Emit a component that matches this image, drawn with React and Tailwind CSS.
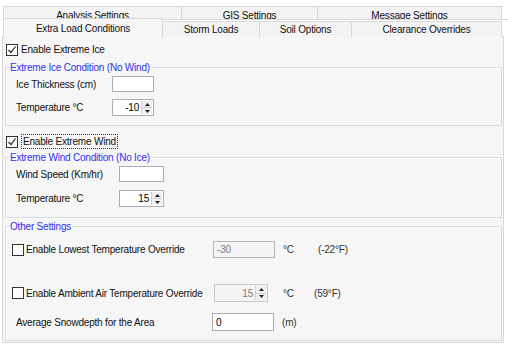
import React from 'react';

const font = "font-['Liberation_Sans',Arial,sans-serif] text-[10px] tracking-[-0.2px]";

const Check = ({ checked }) => (
  <span className="flex h-[12px] w-[12px] shrink-0 items-center justify-center border border-[#333] bg-white">
    {checked && (
      <svg width="10" height="10" viewBox="0 0 10 10">
        <polyline points="1.5,5 4,7.5 8.5,1.5" fill="none" stroke="#222" strokeWidth="1.2" />
      </svg>
    )}
  </span>
);

const SpinButtons = () => (
  <div className="flex w-[11px] flex-col border-l border-[#cfcfcf] bg-[#f0f0f0]">
    <div className="flex flex-1 items-center justify-center border-b border-[#cfcfcf]">
      <svg width="5" height="3" viewBox="0 0 5 3"><polygon points="0,3 2.5,0 5,3" fill="#222" /></svg>
    </div>
    <div className="flex flex-1 items-center justify-center">
      <svg width="5" height="3" viewBox="0 0 5 3"><polygon points="0,0 2.5,3 5,0" fill="#222" /></svg>
    </div>
  </div>
);

const Spin = ({ value, width, height = 'h-[17px]', disabled }) => (
  <div className={`flex ${width} ${height} border ${disabled ? 'border-[#c8c8c8] bg-[#f4f4f4]' : 'border-[#abadb3] bg-white'} p-[1px]`}>
    <div className={`flex flex-1 items-center justify-end pr-[2px] ${disabled ? 'text-[#7a7a7a]' : 'text-black'}`}>{value}</div>
    <SpinButtons />
  </div>
);

const TextBox = ({ value = '', width, height = 'h-[16px]', disabled }) => (
  <div className={`flex ${width} ${height} items-center border px-[3px] ${disabled ? 'border-[#b5b5b5] bg-[#f4f4f4] text-[#7a7a7a]' : 'border-[#abadb3] bg-white text-black'}`}>
    {value}
  </div>
);

const Group = ({ title, children, className = '' }) => (
  <fieldset className={`border border-[#d3dde3] shadow-[inset_1px_1px_0_#ffffff] ${className}`}>
    <legend className="ml-[3px] px-[1px] leading-[13px] text-[#3030f2]">{title}</legend>
    {children}
  </fieldset>
);

const backTabs = [
  { label: 'Analysis Settings', w: 'w-[179px]' },
  { label: 'GIS Settings', w: 'w-[136px]' },
  { label: 'Message Settings', w: 'w-[184px]' },
];

const frontTabs = [
  { label: 'Storm Loads', w: 'w-[97px]' },
  { label: 'Soil Options', w: 'w-[92px]' },
  { label: 'Clearance Overrides', w: 'w-[150px]' },
];

export default function App() {
  return (
    <div className={`h-[344px] w-[508px] overflow-hidden bg-white pl-[2px] pt-[6px] text-[#111] ${font}`}>
      {/* back tab row */}
      <div className="ml-[1px] flex h-[13px]">
        {backTabs.map((t, i) => (
          <div
            key={t.label}
            className={`${t.w} h-[13px] overflow-hidden border-t border-r border-[#d9d9d9] bg-[#f3f3f3] pt-[2px] text-center leading-[13px] ${i === 0 ? 'border-l' : ''}`}
          >
            {t.label}
          </div>
        ))}
      </div>

      {/* front tab row */}
      <div className="relative z-10 flex h-[17px] border-t border-[#d9d9d9]">
        <div className="-mt-[2px] ml-[1px] h-[20px] w-[160px] self-start border-x border-t border-[#d9d9d9] bg-[#f6f6f6] pt-[3px] text-center leading-[14px]">
          Extra Load Conditions
        </div>
        {frontTabs.map((t) => (
          <div
            key={t.label}
            className={`${t.w} mt-[1px] h-[16px] border-t border-r border-[#d9d9d9] bg-[#f3f3f3] text-center leading-[16px]`}
          >
            {t.label}
          </div>
        ))}
      </div>

      {/* page */}
      <div className="h-[307px] w-[502px] border border-[#d9d9d9] bg-[#f6f6f6] px-[2px] pt-[6px]">
        <div className="flex h-[13px] items-center gap-[3px] pl-[1px]">
          <Check checked />
          <span>Enable Extreme Ice</span>
        </div>

        <Group title="Extreme Ice Condition (No Wind)" className="mt-[5px] w-[497px]">
          <div className="flex flex-col gap-[7px] pb-[9px] pl-[10px] pt-[2px]">
            <div className="flex h-[16px] items-center">
              <span className="w-[96px]">Ice Thickness (cm)</span>
              <TextBox width="w-[42px]" />
            </div>
            <div className="flex h-[17px] items-center">
              <span className="w-[96px]">Temperature °C</span>
              <Spin value="-10" width="w-[42px]" />
            </div>
          </div>
        </Group>

        <div className="mt-[8px] flex h-[15px] items-center gap-[3px] pl-[1px]">
          <Check checked />
          <span className="h-[15px] border border-dotted border-[#333] px-[1px] leading-[13px]">Enable Extreme Wind</span>
        </div>

        <Group title="Extreme Wind Condition (No Ice)" className="mt-[2px] w-[497px]">
          <div className="flex flex-col gap-[8px] pb-[10px] pl-[10px] pt-[2px]">
            <div className="flex h-[16px] items-center">
              <span className="w-[103px]">Wind Speed (Km/hr)</span>
              <TextBox width="w-[45px]" />
            </div>
            <div className="flex h-[17px] items-center">
              <span className="w-[103px]">Temperature °C</span>
              <Spin value="15" width="w-[45px]" />
            </div>
          </div>
        </Group>

        <Group title="Other Settings" className="mt-[2px] w-[497px]">
          <div className="flex flex-col pb-[9px] pl-[6px] pt-[8px]">
            <div className="flex h-[17px] items-center">
              <div className="flex w-[201px] items-center gap-[2px]">
                <Check />
                <span>Enable Lowest Temperature Override</span>
              </div>
              <TextBox value="-30" width="w-[62px]" height="h-[17px]" disabled />
              <span className="ml-[8px] w-[35px] text-[#333]">°C</span>
              <span className="text-[#333]">(-22°F)</span>
            </div>

            <div className="mt-[26px] flex h-[18px] items-center">
              <div className="flex w-[202px] items-center gap-[2px]">
                <Check />
                <span>Enable Ambient Air Temperature Override</span>
              </div>
              <Spin value="15" width="w-[54px]" height="h-[18px]" disabled />
              <span className="ml-[15px] w-[31px] text-[#333]">°C</span>
              <span className="text-[#333]">(59°F)</span>
            </div>

            <div className="mt-[11px] flex h-[18px] items-center pl-[4px]">
              <span className="w-[196px]">Average Snowdepth for the Area</span>
              <TextBox value="0" width="w-[62px]" height="h-[18px]" />
              <span className="ml-[8px] text-[#333]">(m)</span>
            </div>
          </div>
        </Group>
      </div>
    </div>
  );
}
